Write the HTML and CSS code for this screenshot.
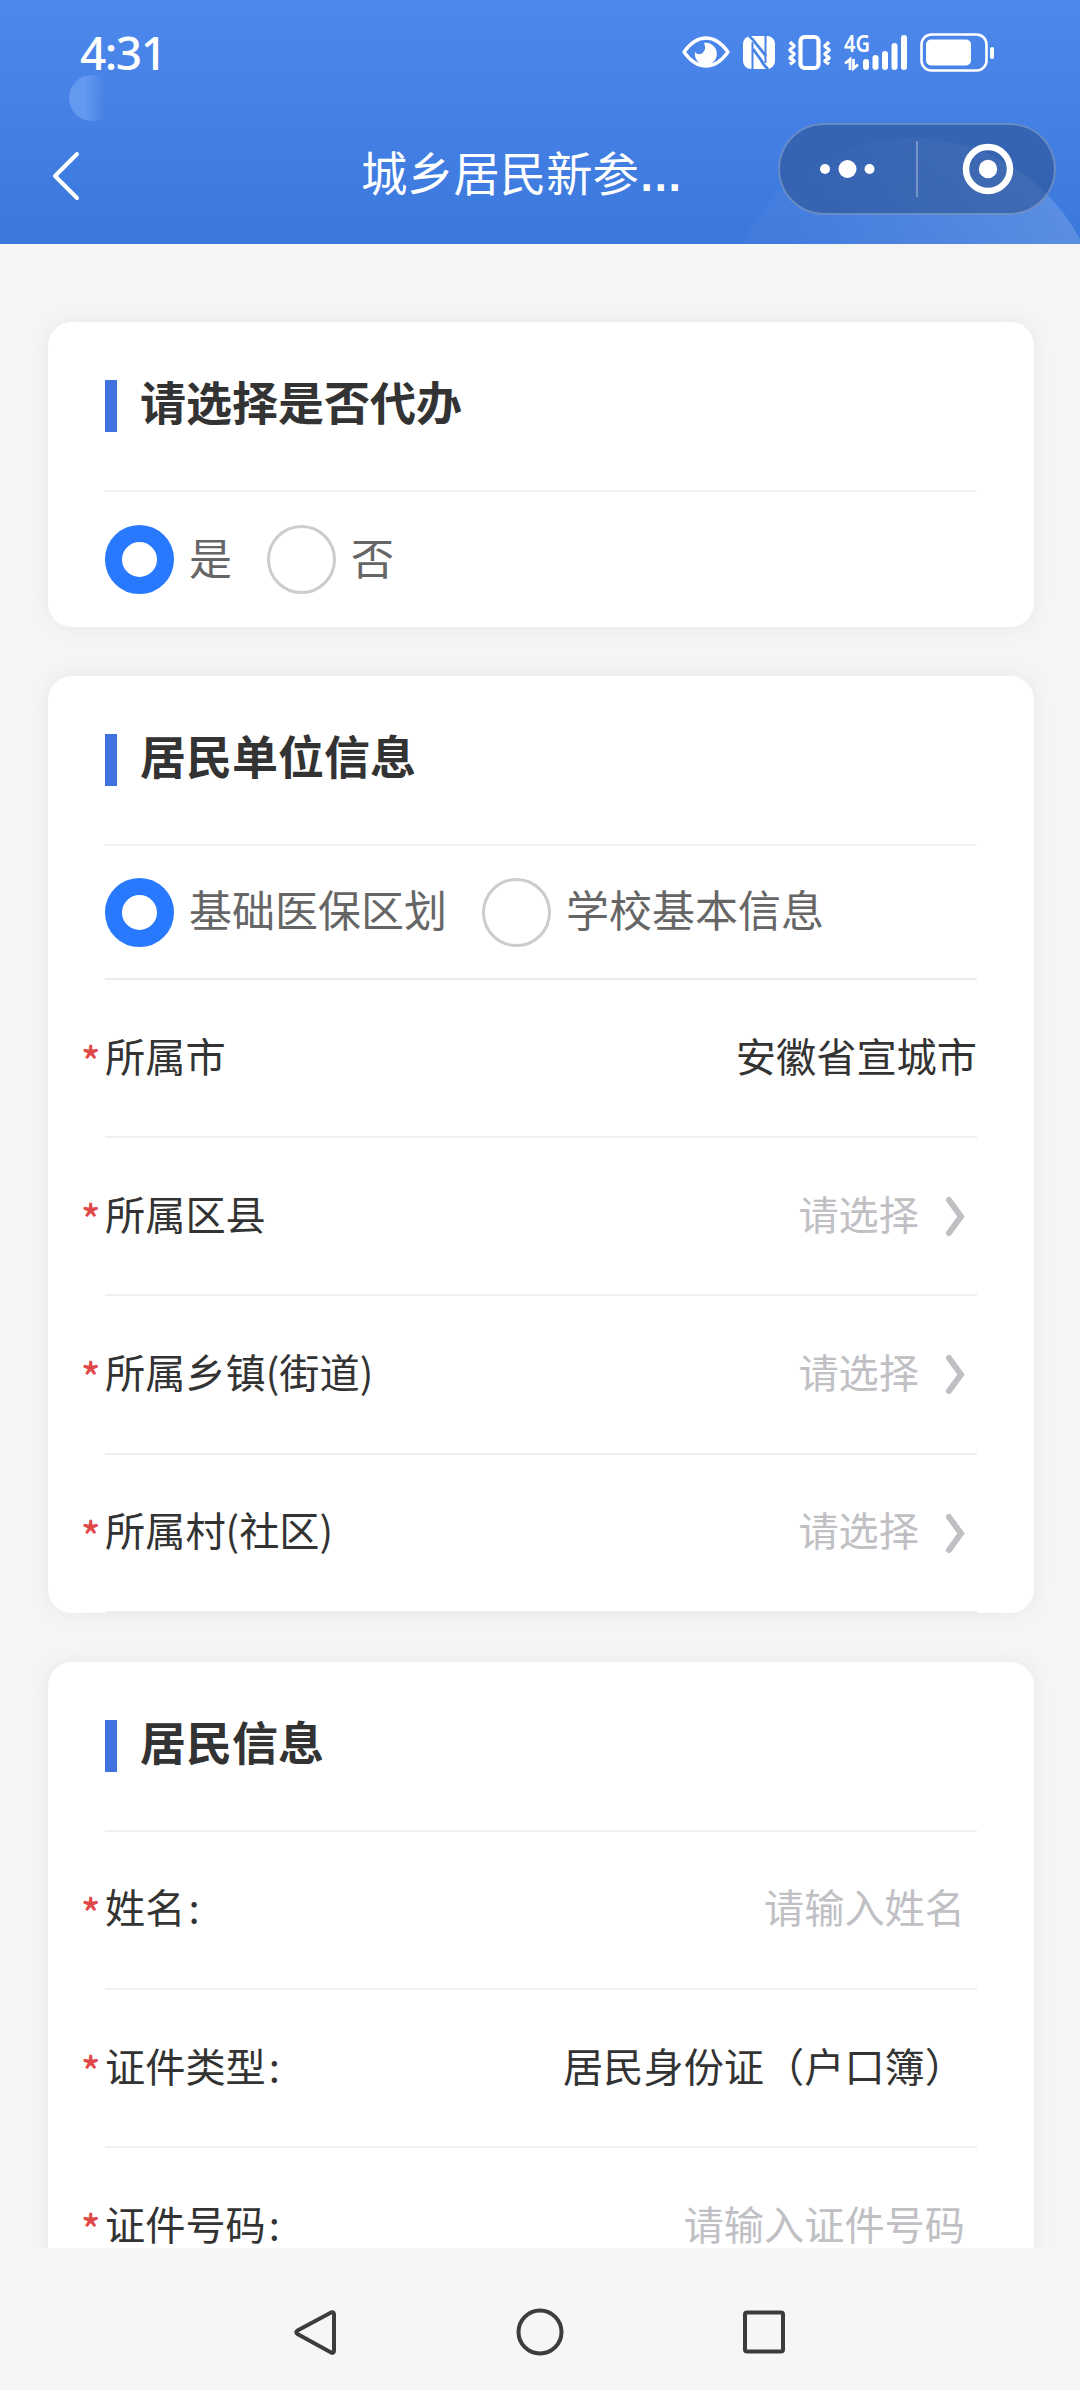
FILE: index.html
```
<!DOCTYPE html>
<html lang="zh-CN">
<head>
  <meta charset="UTF-8">
  <title>城乡居民新参保登记</title>
  <meta name="viewport" content="width=device-width, initial-scale=1.0">
  <link rel="stylesheet" href="styles.css">
</head>
<body>
  <!-- Header -->
  <header class="header">
    <span class="glow"></span>
    <span class="halo"></span>
    <div class="statusBar">
      <span class="time">4:31</span>
      <svg class="statusIcons" width="316" height="44" viewBox="0 0 316 44" fill="#fff">
        <!-- eye -->
        <path d="M4 22Q14 8 26 8T48 22Q38 36 26 36T4 22Z" fill="none" stroke="#fff" stroke-width="3.4" stroke-linejoin="round"/>
        <path d="M24 13A11 11 0 1 1 15 22Q18 25.500 22 23.500Q27 19.500 24 13Z"/>
        <!-- nfc -->
        <rect x="63" y="6" width="32" height="33" rx="8"/>
        <path d="M72.500 12V39M85.500 6V33" stroke="#4883e6" stroke-width="2" fill="none"/>
        <path d="M69 6Q73 9 77 15L86 26M73 19L81 30Q84 36 88 39" stroke="#4883e6" stroke-width="2.800" fill="none"/>
        <!-- vibrate -->
        <rect x="120.500" y="7" width="18" height="31" rx="4" fill="none" stroke="#fff" stroke-width="4.200"/>
        <path d="M110 12L114 16L110 20L114 24L110 28L114 31L110 34M149 12L145 16L149 20L145 24L149 28L145 31L149 34" fill="none" stroke="#fff" stroke-width="3.600" stroke-linejoin="round"/>
        <!-- signal -->
        <text class="netType" x="164" y="22" textLength="26" lengthAdjust="spacingAndGlyphs">4G</text>
        <path d="M165 33.500L170 29.500V40M173.500 29V38.500L178 34.500" fill="none" stroke="#fff" stroke-width="2.800"/>
        <rect x="183" y="29" width="6" height="11" rx="3"/>
        <rect x="192.500" y="25" width="6" height="15" rx="3"/>
        <rect x="202" y="21" width="6" height="19" rx="3"/>
        <rect x="211.500" y="13" width="6" height="27" rx="3"/>
        <rect x="221" y="5" width="6" height="35" rx="3"/>
        <!-- battery -->
        <rect x="241.500" y="4.500" width="65" height="36" rx="10" fill="none" stroke="#fff" stroke-width="2.600"/>
        <rect x="246" y="9.500" width="45" height="26" rx="5"/>
        <rect x="310" y="17" width="4" height="12" rx="2"/>
      </svg>
    </div>
    <div class="navBar">
      <svg class="backIcon" width="30" height="52" viewBox="0 0 30 52">
        <path d="M26 4L4 26L26 48" fill="none" stroke="#fff" stroke-width="4" stroke-linecap="round" stroke-linejoin="round"/>
      </svg>
      <h1 class="pageTitle">城乡居民新参<span class="dots">…</span></h1>
      <div class="capsule">
        <svg width="56" height="20" viewBox="0 0 56 20" fill="#fff">
          <circle cx="5" cy="10" r="5"/>
          <circle cx="27.500" cy="10" r="9"/>
          <circle cx="49.500" cy="10" r="5"/>
        </svg>
        <span class="divider"></span>
        <svg width="52" height="52" viewBox="0 0 52 52">
          <circle cx="26" cy="26" r="22" fill="none" stroke="#fff" stroke-width="6.500"/>
          <circle cx="26" cy="26" r="9.200" fill="#fff"/>
        </svg>
      </div>
    </div>
  </header>

  <!-- Form -->
  <main class="content">
    <section class="card">
      <h2 class="cardTitle"><span>请选择是否代办</span></h2>
      <div class="radioRow">
        <span class="radio checked"></span><span class="radioText">是</span>
        <span class="radio"></span><span class="radioText">否</span>
      </div>
    </section>

    <section class="card">
      <h2 class="cardTitle"><span>居民单位信息</span></h2>
      <div class="radioRow line">
        <span class="radio checked"></span><span class="radioText">基础医保区划</span>
        <span class="radio"></span><span class="radioText">学校基本信息</span>
      </div>
      <div class="row">
        <span class="star">*</span><span class="label">所属市</span>
        <span class="value">安徽省宣城市</span>
      </div>
      <div class="row">
        <span class="star">*</span><span class="label">所属区县</span>
        <span class="value placeholder">请选择</span>
        <svg class="arrow" width="24" height="42" viewBox="0 0 24 42"><path d="M6 5L18 21.500L6 38"/></svg>
      </div>
      <div class="row">
        <span class="star">*</span><span class="label">所属乡镇(街道)</span>
        <span class="value placeholder">请选择</span>
        <svg class="arrow" width="24" height="42" viewBox="0 0 24 42"><path d="M6 5L18 21.500L6 38"/></svg>
      </div>
      <div class="row">
        <span class="star">*</span><span class="label">所属村(社区)</span>
        <span class="value placeholder">请选择</span>
        <svg class="arrow" width="24" height="42" viewBox="0 0 24 42"><path d="M6 5L18 21.500L6 38"/></svg>
      </div>
    </section>

    <section class="card">
      <h2 class="cardTitle"><span>居民信息</span></h2>
      <div class="row">
        <span class="star">*</span><span class="label">姓名<span class="colon">:</span></span>
        <span class="value placeholder inset">请输入姓名</span>
      </div>
      <div class="row">
        <span class="star">*</span><span class="label">证件类型<span class="colon">:</span></span>
        <span class="value inset">居民身份证（户口簿）</span>
      </div>
      <div class="row">
        <span class="star">*</span><span class="label">证件号码<span class="colon">:</span></span>
        <span class="value placeholder inset">请输入证件号码</span>
      </div>
    </section>
  </main>

  <!-- System navigation -->
  <footer class="systemNav">
    <svg width="50" height="50" viewBox="0 0 50 50"><path d="M6.500 23.500L40 5.500Q43 4.500 43 7.500V43.500Q43 46.500 40 45.500L6.500 27Q4 25.300 6.500 23.500Z"/></svg>
    <svg width="50" height="50" viewBox="0 0 50 50"><circle cx="25" cy="25" r="21.500"/></svg>
    <svg width="50" height="50" viewBox="0 0 50 50"><rect x="6" y="5.500" width="38" height="39" rx="2"/></svg>
  </footer>
</body>
</html>
```

FILE: styles.css
```
/* Base Styles */
* {
  box-sizing: border-box;
}
body {
  margin: 0;
  width: 1080px;
  height: 2390px;
  overflow: hidden;
  display: flex;
  flex-direction: column;
  background: #f5f5f6;
  color: #333;
  font-family: "Noto Sans CJK SC", sans-serif;
}
h1, h2 {
  margin: 0;
}
svg {
  display: block;
  flex: none;
}
/* Header */
.header {
  position: relative;
  flex: none;
  height: 244px;
  overflow: hidden;
  background: linear-gradient(#4d88ed, #3b78dc);
  color: #fff;
}
.glow {
  position: absolute;
  left: 69px;
  top: 75px;
  width: 46px;
  height: 46px;
  border-radius: 50%;
  background: linear-gradient(90deg, #6399ee 35%, rgba(99,153,238,0) 78%);
}
.halo {
  position: absolute;
  left: 722px;
  top: 138px;
  width: 380px;
  height: 380px;
  border-radius: 50%;
  background: linear-gradient(105deg, rgba(255,255,255,0.03) 20%, rgba(255,255,255,0.16) 80%);
}
.statusBar {
  position: relative;
  display: flex;
  justify-content: space-between;
  height: 104px;
  padding: 30px 84px 0 80px;
}
.statusIcons {
  overflow: visible;
}
.time {
  margin-top: -1px;
  font-family: "Noto Sans", sans-serif;
  font-size: 46px;
  font-weight: 500;
  line-height: 46px;
  letter-spacing: -1.5px;
}
.netType {
  font-family: "Noto Sans", sans-serif;
  font-size: 24px;
  font-weight: 600;
}
.navBar {
  position: relative;
  display: flex;
  align-items: center;
  height: 140px;
  padding: 0 24px 0 51px;
}
.backIcon {
  margin-top: 3px;
}
.pageTitle {
  margin: -1px 0 0 280px;
  font-size: 46.3px;
  font-weight: 400;
  line-height: 60px;
  white-space: nowrap;
}
.dots {
  font-family: "Liberation Sans", sans-serif;
  font-weight: 700;
  font-size: 44px;
}
.capsule {
  display: flex;
  align-items: center;
  width: 278px;
  height: 92px;
  margin: -10px 0 0 auto;
  padding-left: 40px;
  border: 2px solid rgba(255,255,255,0.25);
  border-radius: 46px;
  background: rgba(40,75,135,0.52);
}
.divider {
  width: 2px;
  height: 56px;
  margin: 0 44px 0 40px;
  background: rgba(255,255,255,0.3);
}
/* Cards */
.content {
  flex: none;
  height: 2004px;
  padding: 78px 46px 0 48px;
  overflow: hidden;
}
.card {
  margin-bottom: 49px;
  padding: 0 57px;
  border-radius: 24px;
  background: #fff;
  box-shadow: 0 0 20px rgba(0,0,0,0.06);
}
.cardTitle {
  display: flex;
  align-items: center;
  height: 170px;
  border-bottom: 2px solid #f0f0f0;
  font-size: 46px;
  font-weight: 700;
  line-height: 60px;
}
.cardTitle::before {
  content: "";
  width: 12px;
  height: 52px;
  margin-right: 23px;
  background: #4072dd;
}
.cardTitle span {
  padding-bottom: 12px;
}
.radioRow {
  display: flex;
  align-items: center;
  height: 135px;
  font-size: 43px;
  color: #666;
}
.line {
  height: 134px;
  border-bottom: 2px solid #ececec;
}
.radio {
  width: 69px;
  height: 69px;
  margin-right: 15px;
  border: 3px solid #ccc;
  border-radius: 50%;
}
.checked {
  border: 17px solid #2979ff;
}
.radioText {
  margin-right: 35px;
  padding-bottom: 8px;
  line-height: 60px;
}
/* Form Rows */
.row {
  display: flex;
  align-items: center;
  height: 158.2px;
  border-bottom: 2px solid #efefef;
  font-size: 40.2px;
  line-height: 44px;
}
.star {
  width: 24px;
  margin-left: -24px;
  padding-top: 4px;
  color: #e04848;
  font-weight: 500;
}
.label {
  padding-bottom: 7px;
}
.colon {
  margin-left: 3px;
}
.value {
  margin-left: auto;
  padding-bottom: 7px;
}
.placeholder {
  color: #c0c0c4;
}
.inset {
  padding-right: 12px;
}
.arrow {
  margin: 0 10px 0 24px;
}
.arrow path {
  fill: none;
  stroke: #c0c0c4;
  stroke-width: 6;
  stroke-linecap: round;
}
/* System Navigation */
.systemNav {
  flex: 1;
  display: flex;
  justify-content: center;
  gap: 174px;
  padding-top: 59px;
  background: #f6f6f6;
}
.systemNav svg {
  fill: none;
  stroke: #3c3c3c;
  stroke-width: 4;
}
```
